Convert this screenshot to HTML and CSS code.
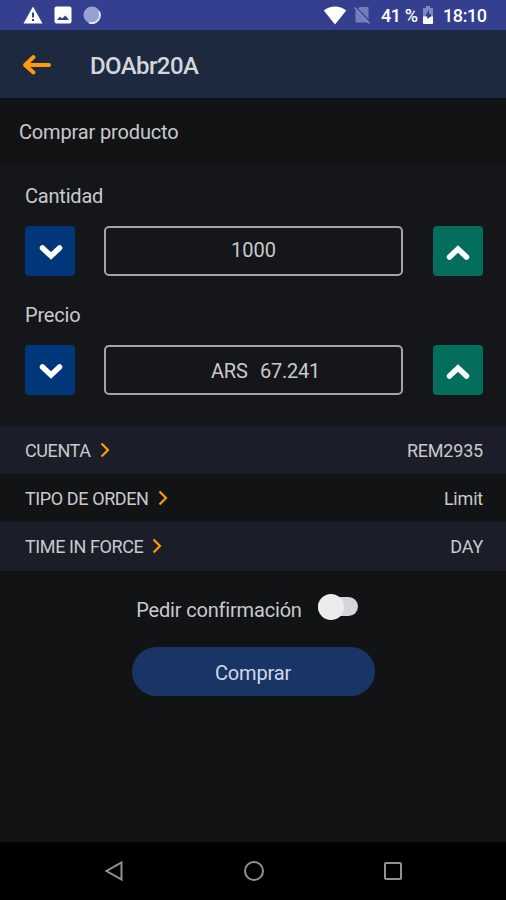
FILE: index.html
```html
<!DOCTYPE html>
<html lang="es">
<head>
    <meta charset="UTF-8">
    <meta name="viewport" content="width=device-width, initial-scale=1.0">
    <title>DOAbr20A</title>
    <link rel="stylesheet" href="styles.css">
</head>
<body>
    <div class="status-bar">
        <div class="status-left">
            <svg width="20" height="18" viewBox="0 0 20 18"><path d="M10 0.5L19.5 17.5H0.5Z" fill="#fff"/><path d="M10 6.5v5M10 13v2" stroke="#34408f" stroke-width="2"/></svg>
            <svg width="18" height="18" viewBox="0 0 18 18"><rect x="0.5" y="0.5" width="17" height="17" rx="2" fill="#fff"/><path d="M3 14l3-3.5 2 2 3.5-3 3.5 4.5z" fill="#34408f"/></svg>
            <svg width="18" height="18" viewBox="0 0 18 18"><circle cx="9" cy="9" r="8.5" fill="#9aa0cf"/><path d="M16 5.5A8 8 0 0 1 6 16.6" fill="none" stroke="#e9eaf6" stroke-width="1.8"/></svg>
        </div>
        <div class="status-right">
            <svg class="wifi" width="24" height="19" viewBox="0 0 24 19"><path d="M0.8 4.5C7.5-.8 16.5-.8 23.2 4.5L12 18.5Z" fill="#fff"/></svg>
            <svg class="sim" width="17" height="18" viewBox="0 0 17 18"><path d="M5.5 1H14.5V16.5H1.5V5Z" fill="#747cbb"/><path d="M2 1.5L17 17" stroke="#34408f" stroke-width="1.6"/><path d="M0.5 1.5L15.5 17.5" stroke="#8389c2" stroke-width="1.5"/></svg>
            <span class="battery-text">41 %</span>
            <svg class="battery" width="12" height="20" viewBox="0 0 12 20"><path d="M4 1h4v2h3v16H1V3h3z" fill="#8088c2"/><path d="M7 4.5L3 11.5h2.5V14H9V9H7z" fill="#34408f"/><path d="M1 11.5h4v2.5l4-2.5h2V18q0 1-1 1H2q-1 0-1-1z" fill="#fff"/></svg>
            <span class="clock">18:10</span>
        </div>
    </div>

    <header class="header">
        <svg width="30" height="22" viewBox="0 0 30 22"><path d="M11.5 3L3 11L11.5 18.5M3.5 11H27" fill="none" stroke="#fe9a0b" stroke-width="4" stroke-linecap="round" stroke-linejoin="round"/></svg>
        <h1>DOAbr20A</h1>
    </header>

    <h2 class="subtitle">Comprar producto</h2>

    <form class="order-form">
        <label class="field-label" for="cantidad">Cantidad</label>
        <div class="field">
            <button type="button" class="step down"><svg width="26" height="18" viewBox="0 0 26 18"><path d="M4.5 5L13 13L21.5 5"/></svg></button>
            <input class="value" id="cantidad" type="text" value="1000">
            <button type="button" class="step up"><svg width="26" height="18" viewBox="0 0 26 18"><path d="M4.5 13L13 5L21.5 13"/></svg></button>
        </div>
        <label class="field-label" for="precio">Precio</label>
        <div class="field">
            <button type="button" class="step down"><svg width="26" height="18" viewBox="0 0 26 18"><path d="M4.5 5L13 13L21.5 5"/></svg></button>
            <input class="value price" id="precio" type="text" value="ARS  67.241">
            <button type="button" class="step up"><svg width="26" height="18" viewBox="0 0 26 18"><path d="M4.5 13L13 5L21.5 13"/></svg></button>
        </div>
    </form>

    <div class="options">
        <div class="option">
            <span>CUENTA</span>
            <svg width="10" height="16" viewBox="0 0 10 16"><path d="M1.5 1.5L8 8L1.5 14.5"/></svg>
            <span class="option-value">REM2935</span>
        </div>
        <div class="option">
            <span>TIPO DE ORDEN</span>
            <svg width="10" height="16" viewBox="0 0 10 16"><path d="M1.5 1.5L8 8L1.5 14.5"/></svg>
            <span class="option-value">Limit</span>
        </div>
        <div class="option">
            <span>TIME IN FORCE</span>
            <svg width="10" height="16" viewBox="0 0 10 16"><path d="M1.5 1.5L8 8L1.5 14.5"/></svg>
            <span class="option-value">DAY</span>
        </div>
    </div>

    <div class="footer">
        <div class="confirm">
            <span>Pedir confirmación</span>
            <div class="switch"><div class="knob"></div></div>
        </div>
        <button class="buy">Comprar</button>
    </div>

    <nav class="nav-bar">
        <svg width="20" height="22" viewBox="0 0 20 22"><path d="M17.5 2.5V19.5L2.5 11Z"/></svg>
        <svg width="22" height="22" viewBox="0 0 22 22"><circle cx="11" cy="11" r="9"/></svg>
        <svg width="20" height="20" viewBox="0 0 20 20"><rect x="2" y="2" width="16" height="16" rx="1"/></svg>
    </nav>
</body>
</html>
```
FILE: styles.css
```css
* {
    box-sizing: border-box;
}
body {
    margin: 0;
    height: 900px;
    display: flex;
    flex-direction: column;
    background-color: #111315;
    color: #c9cacc;
    font-family: Roboto, "Liberation Sans", sans-serif;
    overflow: hidden;
}
svg {
    display: block;
    flex: none;
}
h1, h2 {
    margin: 0;
}
button {
    border: none;
    padding: 0;
    font-family: inherit;
}

.status-bar {
    height: 30px;
    display: flex;
    justify-content: space-between;
    align-items: center;
    padding: 0 18px 0 23px;
    background-color: #34408f;
    color: #fff;
    font-size: 18px;
    font-weight: 500;
    letter-spacing: -0.4px;
}
.status-left, .status-right {
    display: flex;
    align-items: center;
}
.status-left {
    gap: 11px;
}
.sim {
    margin-left: 7px;
}
.battery-text {
    width: 37px;
    margin-left: 10px;
    white-space: nowrap;
}
.battery {
    margin-left: 4px;
}
.clock {
    width: 45px;
    margin-left: 9px;
}

.header {
    height: 69px;
    display: flex;
    align-items: center;
    gap: 38px;
    padding: 2px 22px 0;
    background-color: #1d293f;
    border-bottom: 1px solid #0b0e13;
}
.header svg {
    margin-top: -1px;
}
.header h1 {
    padding-top: 2px;
    font-size: 24px;
    font-weight: 500;
    letter-spacing: -0.6px;
    color: #d3d6dc;
}

.subtitle {
    height: 65px;
    line-height: 66px;
    padding-left: 19px;
    font-size: 20px;
    font-weight: 400;
    letter-spacing: -0.15px;
}

.order-form {
    height: 262px;
    padding: 18px 23px 0 25px;
    background-color: #15161a;
}
.field-label {
    display: block;
    height: 44px;
    line-height: 28px;
    font-size: 20px;
    letter-spacing: -0.2px;
}
.field {
    display: flex;
    justify-content: space-between;
    margin-bottom: 25px;
}
.step {
    width: 50px;
    height: 50px;
    display: flex;
    justify-content: center;
    align-items: center;
    border-radius: 4px;
}
.step svg {
    fill: none;
    stroke: #fff;
    stroke-width: 5.5;
    stroke-linecap: round;
    stroke-linejoin: miter;
}
.down {
    padding-top: 2px;
    padding-left: 2px;
    background-color: #00377a;
}
.up {
    padding-top: 3px;
    background-color: #036e5c;
}
.value {
    width: 299px;
    height: 50px;
    margin-right: 1px;
    padding: 0 0 3px;
    border: 2px solid #a3a4a7;
    border-radius: 5px;
    background: none;
    color: inherit;
    font-family: inherit;
    font-size: 20px;
    text-align: center;
}
.price {
    padding: 1px 0 0 24px;
    letter-spacing: -0.25px;
    word-spacing: 1.5px;
}

.option {
    height: 48px;
    display: flex;
    align-items: center;
    gap: 9px;
    padding: 0 23px 0 25px;
    font-size: 18px;
    letter-spacing: -0.4px;
}
.option:nth-child(odd) {
    background-color: #1b1d28;
}
.option:last-child {
    height: 49px;
}
.option svg {
    margin-top: -1px;
    fill: none;
    stroke: #fe9a0b;
    stroke-width: 2.2;
}
.option-value {
    margin-left: auto;
    letter-spacing: -0.2px;
}

.footer {
    flex: 1;
    display: flex;
    flex-direction: column;
    align-items: center;
    padding-top: 22px;
}
.confirm {
    height: 54px;
    display: flex;
    gap: 16px;
    padding-right: 12px;
    font-size: 20px;
    line-height: 34px;
    letter-spacing: -0.18px;
}
/* the knob is taller than the track */
.switch {
    width: 40px;
    height: 19px;
    margin-top: 4px;
    display: flex;
    align-items: center;
    background-color: #d3d7db;
    border-radius: 10px;
}
.knob {
    width: 26px;
    height: 26px;
    flex: none;
    border-radius: 50%;
    background-color: #ececec;
}
.buy {
    width: 243px;
    height: 49px;
    padding-top: 2px;
    border-radius: 25px;
    background-color: #193566;
    color: #d0d8e8;
    font-size: 20px;
    letter-spacing: -0.15px;
}

.nav-bar {
    height: 58px;
    display: flex;
    justify-content: space-between;
    align-items: center;
    padding: 0 103px 0 104px;
    background-color: #000;
}
.nav-bar svg {
    fill: none;
    stroke: #929292;
    stroke-width: 2;
}
```
